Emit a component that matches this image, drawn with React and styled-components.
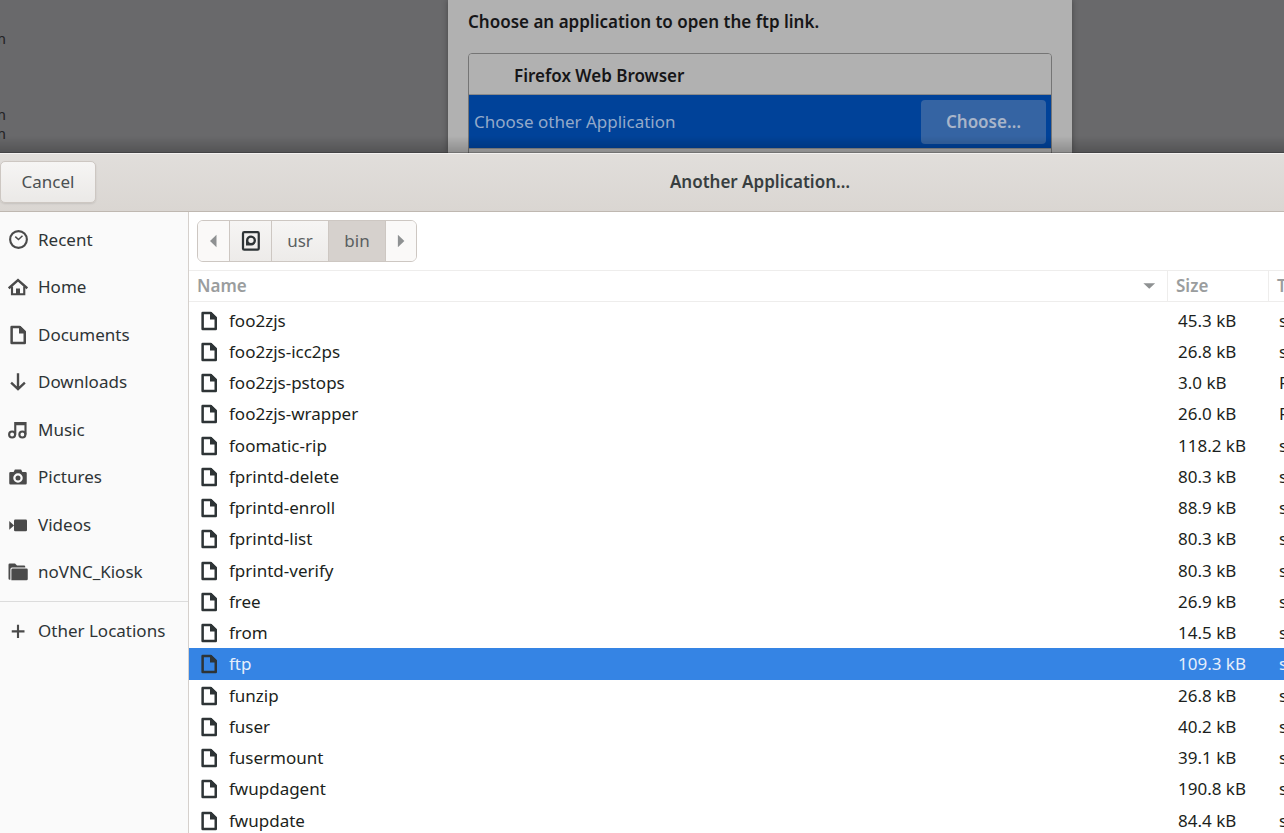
// File chooser opened from the "choose an application" dialog:
// dimmed dialog on top, places sidebar on the left, file list on the right

import React, { useState } from 'react';
import styled, { createGlobalStyle } from 'styled-components';

const GlobalStyle = createGlobalStyle`
* {
  box-sizing: border-box;
}
body {
  margin: 0;
  overflow: hidden;
}
body, button {
  font-family: "Noto Sans", "Open Sans", sans-serif;
  font-size: 17px;
  line-height: 24px;
  color: #2e3436;
}
button {
  border: 0;
  padding: 0;
  background: none;
}
`;

const Screen = styled.div`
display: flex;
flex-direction: column;
height: 100vh;
overflow: hidden;
`;

/* the desktop runs past the right edge of the window */
const Wide = styled.div`
display: flex;
flex-direction: column;
flex: 1;
min-height: 0;
width: calc(100% + 236px);
`;

const Backdrop = styled.div`
position: relative;
display: flex;
justify-content: center;
height: 153px;
flex-shrink: 0;
overflow: hidden;
background: #69696b;
&::after {
  content: '';
  position: absolute;
  inset: auto 0 0 0;
  height: 16px;
  background: linear-gradient(rgba(0, 0, 0, 0), rgba(0, 0, 0, 0.2));
  border-bottom: 1px solid rgba(0, 0, 0, 0.35);
}
`;

const Terminal = styled.div`
position: absolute;
left: 0;
top: 29px;
width: 6px;
display: flex;
flex-direction: column;
align-items: flex-end;
overflow: hidden;
font-size: 15px;
line-height: 19px;
color: #232325;
`;

const Line = styled.span`
height: 19px;
`;

const Sheet = styled.section`
width: 624px;
padding: 10px 20px 0;
background: #b1b1b1;
box-shadow: 0 0 6px rgba(0, 0, 0, 0.35);
color: #161618;
`;

const SheetTitle = styled.h2`
margin: 0 0 19px;
font-size: 17px;
font-weight: 600;
line-height: 24px;
`;

const AppList = styled.div`
height: 140px;
border: 1px solid #757575;
border-radius: 4px;
overflow: hidden;
`;

const AppRow = styled.div`
display: flex;
align-items: center;
justify-content: space-between;
height: ${props => props.$selected ? '54px' : '41px'};
padding: ${props => props.$selected ? '0 5px' : '3px 45px 0'};
font-weight: ${props => props.$selected ? 400 : 600};
color: ${props => props.$selected ? '#93a9c9' : '#161618'};
background: ${props => props.$selected ? '#004299' : '#b1b1b1'};
border-bottom: 1px solid #8a8a8a;
`;

const ChooseButton = styled.button`
width: 125px;
height: 44px;
border-radius: 4px;
background: #3564a3;
color: #a9b5c9;
font-weight: 600;
`;

const HeaderBar = styled.header`
display: grid;
grid-template-columns: 1fr auto 1fr;
align-items: center;
height: 59px;
padding-bottom: 2px;
flex-shrink: 0;
background: linear-gradient(#e1dedb, #dad6d2);
border-top: 1px solid #f3f1f0;
border-bottom: 1px solid #bfb8b1;
`;

const CancelButton = styled.button`
justify-self: start;
width: 96px;
height: 42px;
border: 1px solid #cdc7c2;
border-radius: 5px;
background: linear-gradient(#f6f5f4, #ebe9e7);
box-shadow: 0 1px 2px rgba(0, 0, 0, 0.1);
color: #4b5052;
`;

const HeaderTitle = styled.h1`
margin: 0;
font-size: 17px;
font-weight: 600;
line-height: 24px;
color: #383e40;
`;

const Body = styled.div`
display: flex;
flex: 1;
min-height: 0;
`;

const Sidebar = styled.nav`
width: 189px;
flex-shrink: 0;
padding-top: 4px;
background: #fafafa;
border-right: 1px solid #d5d0cc;
`;

const Places = styled.ul`
margin: 0;
padding: 0 0 5px;
list-style: none;
& + & {
  padding-top: 5px;
  border-top: 1px solid #dcdcdc;
}
`;

const Place = styled.li`
height: 47px;
&:nth-child(even) {
  height: 48px;
}
`;

const PlaceButton = styled.button`
display: flex;
align-items: center;
gap: 10px;
width: 100%;
height: 100%;
padding: 0 8px;
white-space: nowrap;
`;

const Icon = styled.svg`
width: 20px;
height: 20px;
flex-shrink: 0;
fill: none;
stroke: ${props => props.$color || '#4a4a4a'};
stroke-width: 2;
.solid {
  fill: ${props => props.$color || '#4a4a4a'};
  stroke: none;
}
`;

const Main = styled.main`
flex: 1;
min-width: 0;
background: #fff;
overflow: hidden;
`;

const PathRow = styled.div`
padding: 8px;
`;

const PathBar = styled.div`
display: inline-flex;
vertical-align: top;
height: 42px;
border: 1px solid #cdc7c2;
border-radius: 6px;
overflow: hidden;
`;

const Crumb = styled.button`
display: flex;
align-items: center;
justify-content: center;
width: ${props => props.$arrow ? '31px' : props.$icon ? '42px' : '57px'};
color: #5a5f61;
background: ${props => props.$active ? '#d6d1cd' : props.$arrow ? '#faf9f8' : 'linear-gradient(#f6f5f4, #edebe9)'};
& + & {
  border-left: 1px solid #cdc7c2;
}
`;

const Table = styled.table`
width: 100%;
table-layout: fixed;
border-collapse: separate;
border-spacing: 0;
tbody::before {
  content: '';
  display: block;
  height: 3px;
}
`;

const Col = styled.col`
width: ${props => props.$width || 'auto'};
`;

const HeadCell = styled.th`
height: 32px;
padding: 0 8px;
border: solid #eeedec;
border-width: 1px 1px 1px 0;
text-align: left;
`;

const SortButton = styled.button`
display: flex;
align-items: center;
justify-content: space-between;
width: 100%;
font-weight: 600;
color: #9a9d9e;
`;

const FileRow = styled.tr`
height: 31px;
&:nth-child(4n) {
  height: 32px;
}
background: ${props => props.$selected ? '#3584e4' : '#fff'};
color: ${props => props.$selected ? '#e6effb' : '#1c1f20'};
`;

const Cell = styled.td`
padding: 0 0 0 ${props => props.$name ? '8px' : '10px'};
white-space: nowrap;
`;

const FileName = styled.div`
display: flex;
align-items: center;
gap: 8px;
`;

const FileIconBox = styled.span`
display: flex;
justify-content: center;
width: 24px;
`;

const glyphs = {
  recent: (
    <>
      <circle cx="8.4" cy="7.6" r="6.7" strokeWidth="1.7" />
      <path d="M5.8 5.3 8.4 7.6l3.2-3" strokeWidth="1.2" />
    </>
  ),
  home: (
    <>
      <path d="M.6 9 8 2.4 15.4 9" strokeWidth="1.9" />
      <path d="M3.2 7.5v6.3h9.8V7.5" strokeWidth="1.7" />
      <path className="solid" d="M6.4 9.2h3.2v4.8H6.4z" />
    </>
  ),
  documents: (
    <>
      <path d="M2.9 1.6h6.4l4.1 4v8.7H2.9z" strokeWidth="2" strokeLinejoin="round" />
      <path className="solid" d="M8.8.8h1L14.200 5v1.800H8.800z" />
    </>
  ),
  downloads: <path d="M8 1v12.5M2.5 8.5 8 13.7l5.5-5.2" strokeWidth="1.9" />,
  music: (
    <>
      <circle cx="3.3" cy="11.6" r="2.4" strokeWidth="1.7" />
      <circle cx="11.5" cy="11.6" r="2.4" strokeWidth="1.7" />
      <path d="M5.8 11.6V2.5H14v9.100M5.800 3.300H14" strokeWidth="1.7" />
    </>
  ),
  pictures: (
    <path
      className="solid"
      fillRule="evenodd"
      d="M5.5 2h5l1 2H14q1 0 1 1v8q0 1-1 1H2q-1 0-1-1V5q0-1 1-1h2.500zM8 5a3.800 3.800 0 1 0 0 7.600A3.800 3.800 0 0 0 8 5zm0 1.800a2 2 0 1 1 0 4 2 2 0 0 1 0-4z"
    />
  ),
  videos: (
    <>
      <rect className="solid" x="4.8" y="3.6" width="10.4" height="9.4" rx="1" />
      <path className="solid" d="M1 4.8 4.8 8.3 1 11.8z" />
    </>
  ),
  folder: (
    <>
      <path className="solid" d="M.4 2.200q0-1 1-1h4.200l1.600 1.600h5.600q1 0 1 1v.6H3.200q-1.300 0-1.300 1.300v8.500H1.400q-1 0-1-1z" />
      <path className="solid" d="M2.700 6.200q0-1 1-1h11.100q1 0 1 1v7.400q0 1-1 1H2.700z" />
    </>
  ),
  plus: <path d="M8 3v10.6M3 8.3h10.2" strokeWidth="1.7" />,
  disk: (
    <>
      <rect x="1.6" y=".9" width="12.600" height="14" rx="1" strokeWidth="1.8" />
      <path
        className="solid"
        fillRule="evenodd"
        d="M4 11.600V7.400a4 4 0 1 1 4.200 4.200zM8 5.300a2.100 2.100 0 1 0 0 4.200 2.100 2.100 0 0 0 0-4.200z"
      />
    </>
  ),
  left: <path className="solid" d="M10 3v10L4.800 8z" />,
  right: <path className="solid" d="M5.5 3v10l5.200-5z" />,
  down: <path className="solid" d="M3.500 5.700h9.400l-4.700 4.500z" />,
};

const places = [
  ['recent', 'Recent'],
  ['home', 'Home'],
  ['documents', 'Documents'],
  ['downloads', 'Downloads'],
  ['music', 'Music'],
  ['pictures', 'Pictures'],
  ['videos', 'Videos'],
  ['folder', 'noVNC_Kiosk'],
];

const files = [
  ['foo2zjs', '45.3 kB', 's'],
  ['foo2zjs-icc2ps', '26.8 kB', 's'],
  ['foo2zjs-pstops', '3.0 kB', 'P'],
  ['foo2zjs-wrapper', '26.0 kB', 'P'],
  ['foomatic-rip', '118.2 kB', 's'],
  ['fprintd-delete', '80.3 kB', 's'],
  ['fprintd-enroll', '88.9 kB', 's'],
  ['fprintd-list', '80.3 kB', 's'],
  ['fprintd-verify', '80.3 kB', 's'],
  ['free', '26.9 kB', 's'],
  ['from', '14.5 kB', 's'],
  ['ftp', '109.3 kB', 's'],
  ['funzip', '26.8 kB', 's'],
  ['fuser', '40.2 kB', 's'],
  ['fusermount', '39.1 kB', 's'],
  ['fwupdagent', '190.8 kB', 's'],
  ['fwupdate', '84.4 kB', 's'],
];

function Glyph({ name, color }) {
  return <Icon viewBox="0 0 16 16" $color={color} aria-hidden="true">{glyphs[name]}</Icon>;
}

function PlaceItem({ icon, label }) {
  return (
    <Place>
      <PlaceButton type="button"><Glyph name={icon} />{label}</PlaceButton>
    </Place>
  );
}

function AppDialog() {
  return (
    <Backdrop>
      <Terminal>
        <Line>m</Line>
        <Line />
        <Line />
        <Line />
        <Line>m</Line>
        <Line>m</Line>
      </Terminal>
      <Sheet>
        <SheetTitle>Choose an application to open the ftp link.</SheetTitle>
        <AppList>
          <AppRow>Firefox Web Browser</AppRow>
          <AppRow $selected>
            Choose other Application
            <ChooseButton type="button">Choose…</ChooseButton>
          </AppRow>
        </AppList>
      </Sheet>
    </Backdrop>
  );
}

function FileTable() {
  const [selected, setSelected] = useState('ftp');
  return (
    <Table>
      <colgroup>
        <Col />
        <Col $width="101px" />
        <Col $width="251px" />
      </colgroup>
      <thead>
        <tr>
          <HeadCell>
            <SortButton type="button">Name<Glyph name="down" color="#8e9192" /></SortButton>
          </HeadCell>
          <HeadCell><SortButton type="button">Size</SortButton></HeadCell>
          <HeadCell><SortButton type="button">T</SortButton></HeadCell>
        </tr>
      </thead>
      <tbody>
        {files.map(([name, size, type]) => (
          <FileRow key={name} $selected={name === selected} onClick={() => setSelected(name)}>
            <Cell $name>
              <FileName>
                <FileIconBox><Glyph name="documents" color="#2e3436" /></FileIconBox>
                {name}
              </FileName>
            </Cell>
            <Cell>{size}</Cell>
            <Cell>{type}</Cell>
          </FileRow>
        ))}
      </tbody>
    </Table>
  );
}

function App() {
  return (
    <Screen>
      <GlobalStyle />
      <Wide>
        <AppDialog />
        <HeaderBar>
          <CancelButton type="button">Cancel</CancelButton>
          <HeaderTitle>Another Application…</HeaderTitle>
        </HeaderBar>
        <Body>
          <Sidebar>
            <Places>
              {places.map(([icon, label]) => <PlaceItem key={label} icon={icon} label={label} />)}
            </Places>
            <Places>
              <PlaceItem icon="plus" label="Other Locations" />
            </Places>
          </Sidebar>
          <Main>
            <PathRow>
              <PathBar>
                <Crumb type="button" $arrow aria-label="Back"><Glyph name="left" color="#8e9192" /></Crumb>
                <Crumb type="button" $icon aria-label="Root"><Glyph name="disk" color="#2e3436" /></Crumb>
                <Crumb type="button">usr</Crumb>
                <Crumb type="button" $active>bin</Crumb>
                <Crumb type="button" $arrow aria-label="Forward"><Glyph name="right" color="#8e9192" /></Crumb>
              </PathBar>
            </PathRow>
            <FileTable />
          </Main>
        </Body>
      </Wide>
    </Screen>
  );
}
export default App;
